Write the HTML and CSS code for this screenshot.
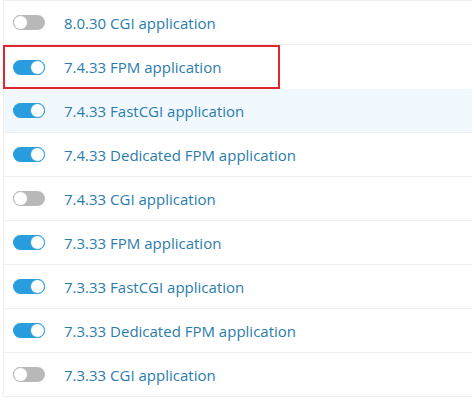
FILE: index.html
```html
<!DOCTYPE html>
<html lang="en">
<head>
  <meta charset="UTF-8">
  <title>PHP handlers</title>
  <link rel="stylesheet" href="styles.css">
</head>
<body>
  <ul class="handlers">
    <li class="handler"><span class="toggle"></span><span class="name">8.0.30 CGI application</span></li>
    <li class="handler selected"><span class="toggle on"></span><span class="name">7.4.33 FPM application</span></li>
    <li class="handler hover"><span class="toggle on"></span><span class="name">7.4.33 FastCGI application</span></li>
    <li class="handler"><span class="toggle on"></span><span class="name">7.4.33 Dedicated FPM application</span></li>
    <li class="handler"><span class="toggle"></span><span class="name">7.4.33 CGI application</span></li>
    <li class="handler"><span class="toggle on"></span><span class="name">7.3.33 FPM application</span></li>
    <li class="handler"><span class="toggle on"></span><span class="name">7.3.33 FastCGI application</span></li>
    <li class="handler"><span class="toggle on"></span><span class="name">7.3.33 Dedicated FPM application</span></li>
    <li class="handler"><span class="toggle"></span><span class="name">7.3.33 CGI application</span></li>
  </ul>
</body>
</html>
```
FILE: styles.css
```css
body {
  margin: 0;
  padding: 0 2px 0 3px;
  background: #fff;
  font-family: "Open Sans", Arial, sans-serif;
}
.handlers {
  list-style: none;
  margin: 0;
  padding: 0;
  border-top: 1px solid #ececec;
  border-left: 1px solid #f0f0f0;
}
.handler {
  display: flex;
  align-items: center;
  gap: 19px;
  height: 43px;
  padding-left: 9px;
  border-bottom: 1px solid #ececec;
}
.handler.hover {
  background: #f2f9fe;
}
.handler.selected {
  width: 265px;
  margin-left: -1px;
  padding-left: 8px;
  height: 40px;
  border: 2px solid #e0262f;
}
.toggle {
  position: relative;
  width: 32px;
  height: 15px;
  border-radius: 8px;
  background: #b9b9b9;
  flex-shrink: 0;
}
.toggle::after {
  content: "";
  position: absolute;
  top: 0;
  left: 0;
  width: 13px;
  height: 13px;
  border-radius: 50%;
  background: #fff;
  border: 1px solid #b9b9b9;
}
.toggle.on {
  background: #2a9de0;
}
.toggle.on::after {
  left: auto;
  right: 0;
  border-color: #2a9de0;
}
.name {
  font-size: 15px;
  color: #2a7cad;
}
```
